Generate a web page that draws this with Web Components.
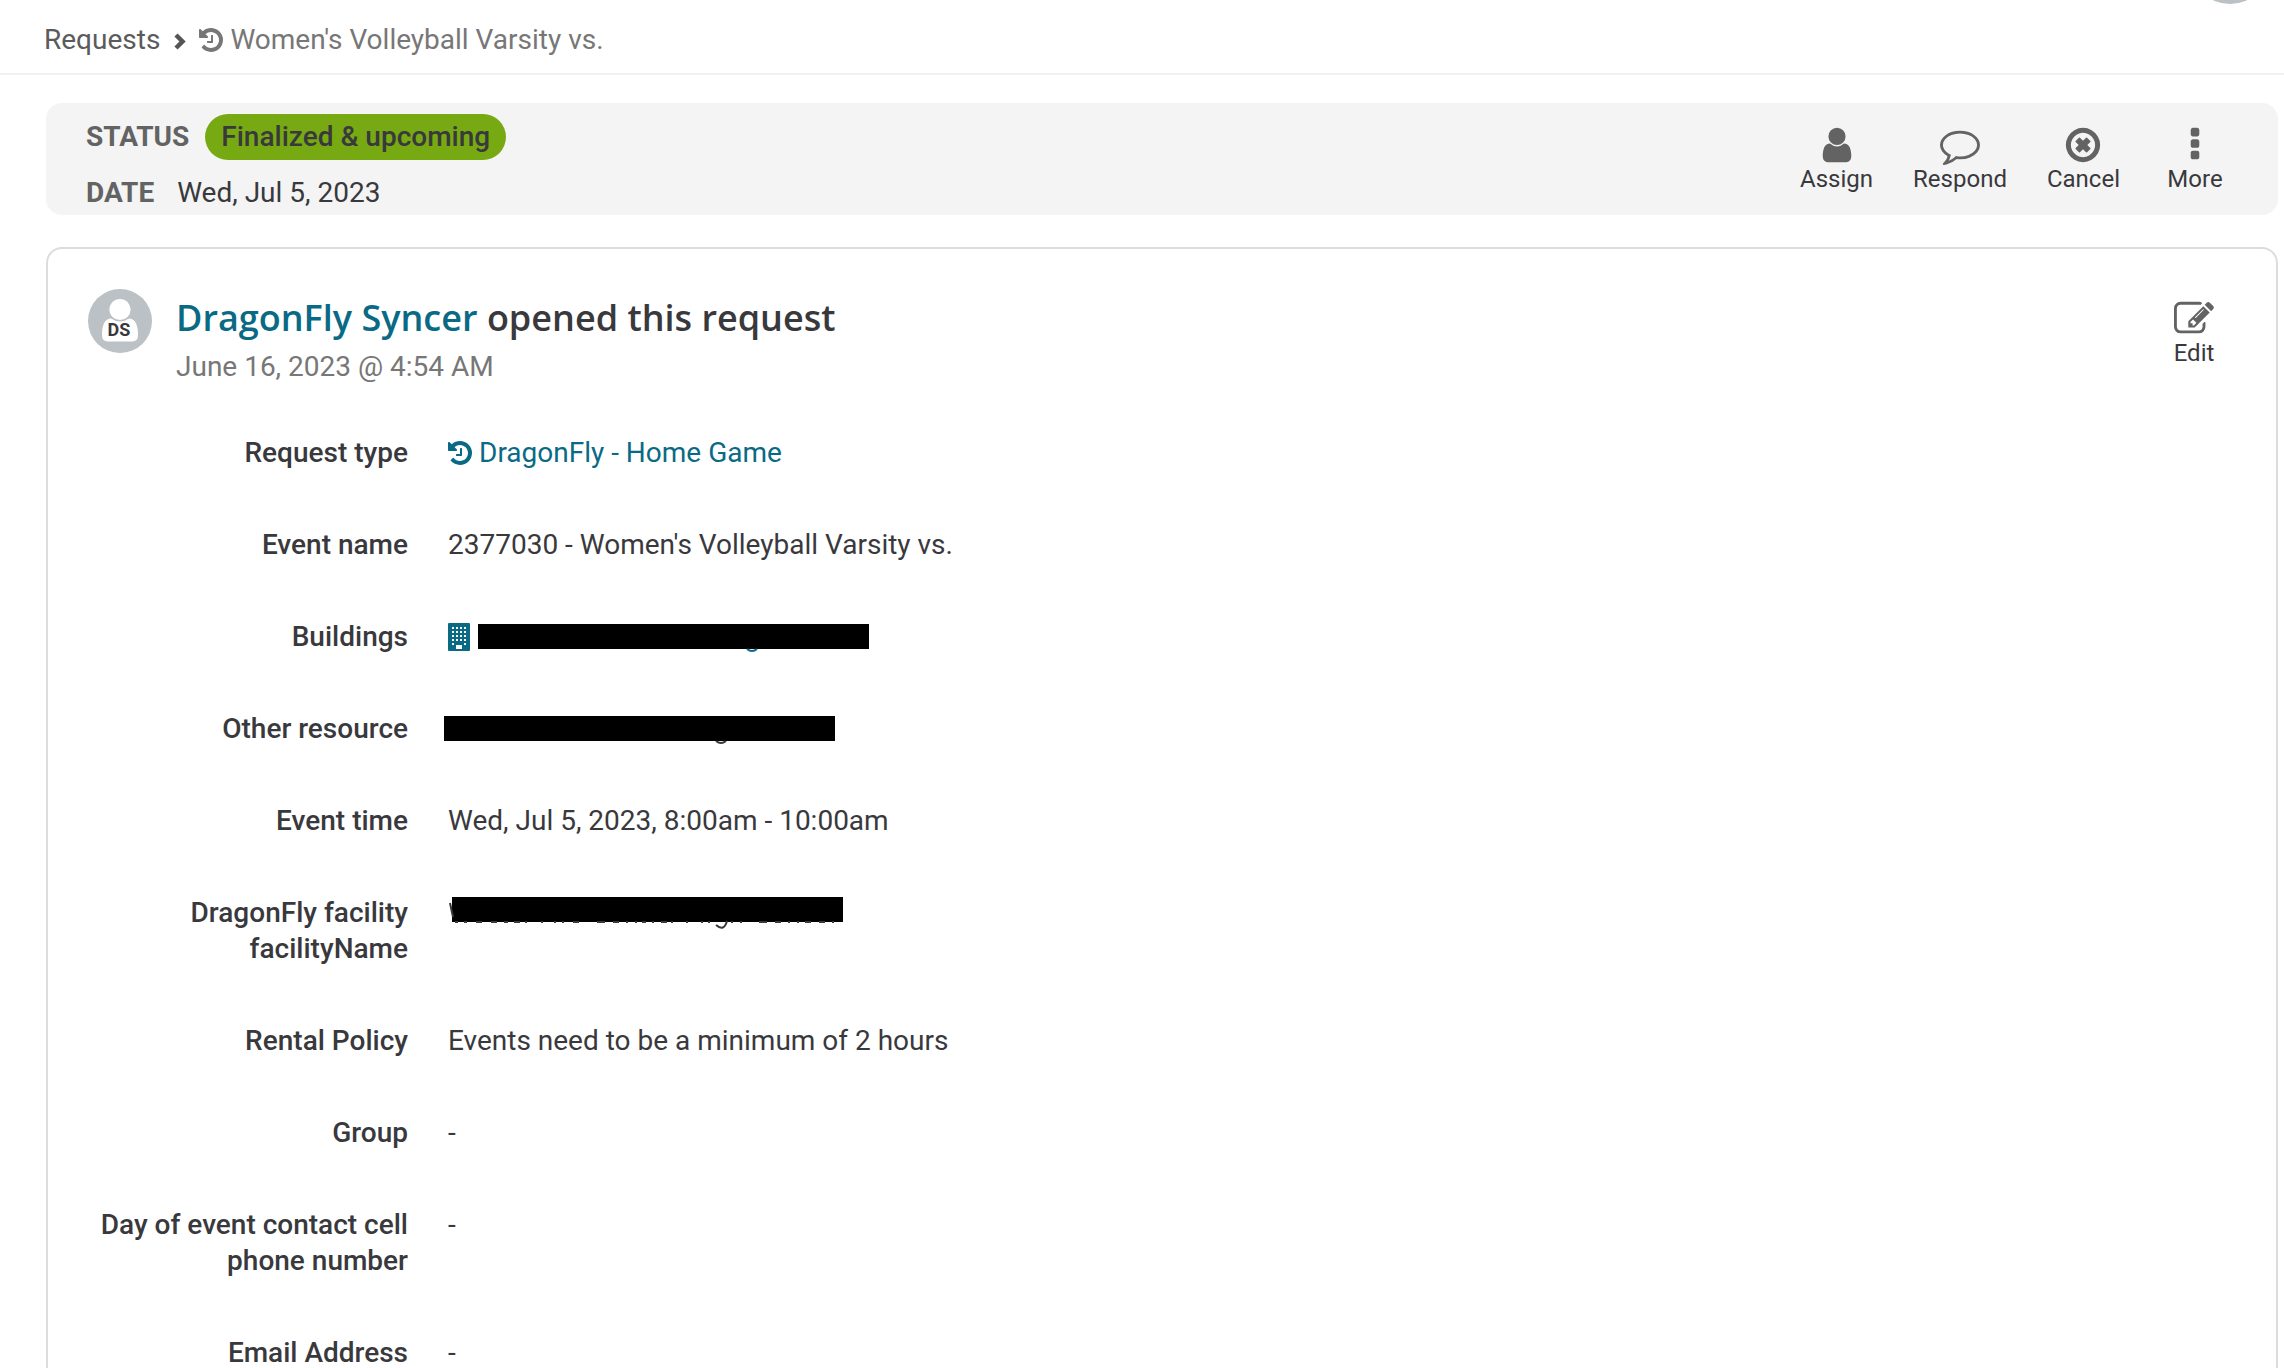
<!DOCTYPE html>
<html lang="en">
<head>
<meta charset="utf-8">
<title>Women's Volleyball Varsity vs.</title>
<style>
  body {
    margin: 0;
    background: #fff;
    color: #39393d;
    font: 28px/36px Roboto, "Liberation Sans", sans-serif;
    --link: #0a6a85;
    --icon: #636363;
    --muted: #777;
  }
  main { padding: 28px 6px 0 46px; }
</style>
</head>
<body>
<page-header>
  <a slot="parent" href="#requests">Requests</a>
  <fa-icon name="history"></fa-icon>
  <span>Women's Volleyball Varsity vs.</span>
</page-header>
<main>
  <status-bar>
    <span slot="status">Finalized &amp; upcoming</span>
    <span slot="date">Wed, Jul 5, 2023</span>
    <action-button slot="actions" icon="user">Assign</action-button>
    <action-button slot="actions" icon="comment">Respond</action-button>
    <action-button slot="actions" icon="cancel">Cancel</action-button>
    <action-button slot="actions" icon="more">More</action-button>
  </status-bar>
  <request-card initials="DS">
    <text-link slot="who" href="#user">DragonFly Syncer</text-link>
    <span slot="what">opened this request</span>
    <span slot="when">June 16, 2023 @ 4:54 AM</span>
    <action-button slot="actions" icon="edit">Edit</action-button>
    <field-row label="Request type"><text-link href="#type" icon="history">DragonFly - Home Game</text-link></field-row>
    <field-row label="Event name">2377030 - Women's Volleyball Varsity vs.</field-row>
    <field-row label="Buildings"><text-link href="#building" icon="building"><redacted-text kind="building"></redacted-text></text-link></field-row>
    <field-row label="Other resource"><redacted-text kind="resource"></redacted-text></field-row>
    <field-row label="Event time">Wed, Jul 5, 2023, 8:00am - 10:00am</field-row>
    <field-row label="DragonFly facility facilityName"><redacted-text kind="facility"></redacted-text></field-row>
    <field-row label="Rental Policy">Events need to be a minimum of 2 hours</field-row>
    <field-row label="Group">-</field-row>
    <field-row label="Day of event contact cell phone number">-</field-row>
    <field-row label="Email Address">-</field-row>
  </request-card>
</main>

<script>
"use strict";

(function() {
  const icons = {
    history: 'M1664 896q0 156-61 298t-164 245-245 164-298 61q-172 0-327-72.5t-264-204.5q-7-10-6.5-22.5t8.5-20.5l137-138q10-9 25-9 16 2 23 12 73 95 179 147t225 52q104 0 198.5-40.5t163.5-109.5 109.5-163.5 40.5-198.5-40.5-198.5-109.5-163.5-163.5-109.5-198.5-40.5q-98 0-188 35.5t-160 101.5l137 138q31 30 14 69-17 40-59 40h-448q-26 0-45-19t-19-45v-448q0-42 40-59 39-17 69 14l130 129q107-101 244.5-156.5t284.5-55.5q156 0 298 61t245 164 164 245 61 298zm-640-288v448q0 14-9 23t-23 9h-320q-14 0-23-9t-9-23v-64q0-14 9-23t23-9h224v-352q0-14 9-23t23-9h64q14 0 23 9t9 23z',
    user: 'M1536 1399q0 109-62.5 187t-150.5 78h-854q-88 0-150.5-78t-62.5-187q0-85 8.5-160.5t31.5-152 58.5-131 94-89 134.5-34.5q131 128 313 128t313-128q76 0 134.5 34.5t94 89 58.5 131 31.5 152 8.5 160.5zm-256-887q0 159-112.5 271.5t-271.5 112.5-271.5-112.5-112.5-271.5 112.5-271.5 271.5-112.5 271.5 112.5 112.5 271.5z',
    comment: 'M896 384q-204 0-381.5 69.5t-282 187.5-104.5 255q0 112 71.5 213.5t201.5 175.5l87 50-27 96q-24 91-70 172 152-63 275-171l43-38 57 6q69 8 130 8 204 0 381.5-69.5t282-187.5 104.5-255-104.5-255-282-187.5-381.5-69.5zm896 512q0 174-120 321.5t-326 233-450 85.5q-70 0-145-8-198 175-460 242-49 14-114 22h-5q-15 0-27-10.5t-16-27.5v-1q-3-4-.5-12t2-10 4.5-9.5l6-9 7-8.5 8-9q7-8 31-34.5t34.5-38 31-39.5 32.5-51 27-59 26-76q-157-89-247.5-220t-90.5-281q0-130 71-248.5t191-204.5 286-136.5 348-50.5 348 50.5 286 136.5 191 204.5 71 248.5z',
    cancel: 'M1225 1079l-146 146q-10 10-23 10t-23-10l-137-137-137 137q-10 10-23 10t-23-10l-146-146q-10-10-10-23t10-23l137-137-137-137q-10-10-10-23t10-23l146-146q10-10 23-10t23 10l137 137 137-137q10-10 23-10t23 10l146 146q10 10 10 23t-10 23l-137 137 137 137q10 10 10 23t-10 23zm215-183q0-148-73-273t-198-198-273-73-273 73-198 198-73 273 73 273 198 198 273 73 273-73 198-198 73-273zm224 0q0 209-103 385.5t-279.5 279.5-385.5 103-385.5-103-279.5-279.5-103-385.5 103-385.5 279.5-279.5 385.5-103 385.5 103 279.5 279.5 103 385.5z',
    more: 'M1088 1248v192q0 40-28 68t-68 28h-192q-40 0-68-28t-28-68v-192q0-40 28-68t68-28h192q40 0 68 28t28 68zm0-512v192q0 40-28 68t-68 28h-192q-40 0-68-28t-28-68v-192q0-40 28-68t68-28h192q40 0 68 28t28 68zm0-512v192q0 40-28 68t-68 28h-192q-40 0-68-28t-28-68v-192q0-40 28-68t68-28h192q40 0 68 28t28 68z',
    edit: 'M888 1184l116-116-152-152-116 116v56h96v96h56zm440-720q-16-16-33 1l-350 350q-17 17-1 33t33-1l350-350q17-17 1-33zm80 594v190q0 119-84.5 203.5t-203.5 84.5h-832q-119 0-203.5-84.5t-84.5-203.5v-832q0-119 84.5-203.5t203.5-84.5h832q63 0 117 25 15 7 18 23 3 17-9 29l-49 49q-14 14-32 8-23-6-45-6h-832q-66 0-113 47t-47 113v832q0 66 47 113t113 47h832q66 0 113-47t47-113v-126q0-13 9-22l64-64q15-15 35-7t20 29zm-96-738l288 288-672 672h-288v-288zm444 132l-92 92-288-288 92-92q28-28 68-28t68 28l152 152q28 28 28 68t-28 68z',
    // windows are 128 units square on a 256 unit pitch
    building: 'M64 0h1280q64 0 64 64v1664q0 64-64 64H64q-64 0-64-64V64Q0 0 64 0z' +
      [256, 512, 768, 1024].map(y => [256, 512, 768, 1024].map(x => `M${x} ${y}v128h128v-128z`).join('')).join('') +
      'M256 1280v128h128v-128zM1024 1280v128h128v-128zM512 1408v256h384v-256z'
  }
  const boxes = {history: '128 0 1536 1792', building: '0 0 1408 1792'}

  // start and end of each mark along the bottom edge of the facility bar
  const marks = [
    [7, 10], [16, 19], [28, 34], [43, 49], [56, 60], [66, 72], [77, 79], [93, 95], [106, 108], [114, 116],
    [125, 131], [149, 157], [165, 171], [178, 180], [187, 189], [194, 198], [204, 206], [213, 219], [223, 225],
    [238, 240], [253, 255], [260, 262], [283, 285], [292, 294], [311, 319], [327, 333], [340, 342], [349, 351],
    [357, 363], [371, 377], [384, 386]
  ]

  // black bar, plus the bits of the lettering it fails to cover
  const redactions = {
    building: '<rect x="1" y="5" width="391" height="25"/><path d="M270 30q5 4 10 0"/>',
    resource: '<rect x="-4" y="5" width="391" height="25"/><path d="M268 30q5 4 10 0"/>',
    facility: '<rect x="4" y="2" width="391" height="25"/><path d="M2 8l3 14M268 30q8 7 11-4"/>' +
      `<path d="${marks.map(([from, to]) => `M${from} 27H${to}`).join('')}"/>`
  }

  const define = (name, render) => {
    customElements.define(name, class extends HTMLElement {
      constructor() {
        super()
        this.attachShadow({mode: 'open'})
      }
      connectedCallback() {
        const template = document.createElement('template')
        template.innerHTML = render(this)
        this.shadowRoot.replaceChildren(template.content.cloneNode(true))
      }
    })
  }

  define('fa-icon', el => {
    const name = el.getAttribute('name')
    return `
    <style>
      :host { display: block; height: 28px; }
      svg { display: block; height: 100%; fill: currentColor; }
    </style>
    <svg viewBox="${boxes[name] || '0 0 1792 1792'}" aria-hidden="true"><path fill-rule="${name === 'building' ? 'evenodd' : 'nonzero'}" d="${icons[name]}"/></svg>`
  })

  define('redacted-text', el => `
    <style>
      :host { display: block; }
      svg { display: block; overflow: visible; }
      path { fill: none; stroke: currentColor; stroke-width: 2; }
    </style>
    <svg width="391" height="36" role="img" aria-label="redacted">${redactions[el.getAttribute('kind')]}</svg>`)

  define('text-link', el => `
    <style>
      :host { display: inline-block; vertical-align: top; }
      a { display: flex; align-items: center; gap: 7px; color: var(--link); text-decoration: none; }
    </style>
    <a href="${el.getAttribute('href')}">
      ${el.hasAttribute('icon') ? `<fa-icon name="${el.getAttribute('icon')}"></fa-icon>` : ''}
      <slot></slot>
    </a>`)

  define('action-button', el => `
    <style>
      :host { display: block; }
      button {
        display: flex; flex-direction: column; align-items: center;
        min-width: 110px; padding: 0 20px; border: 0; background: none;
        color: inherit; font: 24px/28px Roboto, "Liberation Sans", sans-serif;
      }
      fa-icon { height: 40px; color: var(--icon); }
    </style>
    <button type="button"><fa-icon name="${el.getAttribute('icon')}"></fa-icon><slot></slot></button>`)

  define('page-header', () => `
    <style>
      :host { display: block; border-bottom: 2px solid #f1f1f1; }
      header { display: flex; align-items: flex-start; padding-right: 36px; }
      nav { display: flex; flex: 1; align-items: center; gap: 7px; padding: 22px 0 15px 44px; color: var(--muted); }
      ::slotted(a) { color: #5b5b5b; text-decoration: none; }
      .chevron { display: block; margin: 0 6px; }
    </style>
    <header>
      <nav aria-label="Breadcrumb">
        <slot name="parent"></slot>
        <svg class="chevron" width="13" height="20" aria-hidden="true"><path d="M3 5l6.5 6.5L3 18" fill="none" stroke="#555" stroke-width="4.5"/></svg>
        <slot></slot>
      </nav>
      <svg width="36" height="4" aria-hidden="true"><circle cx="18" cy="-36" r="40" fill="#bbc1c4"/></svg>
    </header>`)

  define('status-bar', () => `
    <style>
      :host { display: flex; align-items: center; justify-content: space-between; padding-right: 28px; border-radius: 16px; background: #f4f4f4; }
      dl { margin: 0; padding: 11px 0 4px 40px; }
      div { display: flex; align-items: center; gap: 16px; }
      .date { gap: 23px; margin-top: 15px; }
      dt { color: #636363; font-weight: 700; }
      dd { margin: 0; }
      .pill { padding: 5px 16px; border-radius: 23px; background: #77aa12; font-weight: 500; }
      nav { display: flex; }
    </style>
    <dl>
      <div><dt>STATUS</dt><dd class="pill"><slot name="status"></slot></dd></div>
      <div class="date"><dt>DATE</dt><dd><slot name="date"></slot></dd></div>
    </dl>
    <nav><slot name="actions"></slot></nav>`)

  define('request-card', el => `
    <style>
      :host { display: block; margin-top: 32px; padding: 40px 27px 40px 40px; border: 2px solid #dcdcdc; border-radius: 16px; }
      header { display: flex; gap: 24px; margin-bottom: 50px; }
      .title { flex: 1; }
      h2 { margin: 0; font: 600 36px/58px "Open Sans", sans-serif; }
      p { margin: 2px 0 0; color: var(--muted); }
      .actions { padding-top: 10px; }
      text { font: 700 18px Roboto, sans-serif; fill: #39393d; text-anchor: middle; }
    </style>
    <header>
      <svg width="64" height="64" role="img" aria-label="${el.getAttribute('initials')}">
        <circle cx="32" cy="32" r="32" fill="#bbc1c4"/>
        <path d="M23 29.5q9 6 18 0 9 .5 9 16.500 0 6.500-6 6.500H20q-6 0-6-6.500Q14 30 23 29.500z" fill="#fff"/>
        <circle cx="32" cy="20.500" r="11.500" fill="#bbc1c4"/>
        <circle cx="32" cy="20.500" r="10.600" fill="#fff"/>
        <text x="31" y="47">${el.getAttribute('initials')}</text>
      </svg>
      <div class="title">
        <h2><slot name="who"></slot> <slot name="what"></slot></h2>
        <p><slot name="when"></slot></p>
      </div>
      <div class="actions"><slot name="actions"></slot></div>
    </header>
    <slot></slot>`)

  define('field-row', el => `
    <style>
      :host { display: grid; grid-template-columns: 320px 1fr; gap: 40px; margin-bottom: 56px; }
      .label { font-weight: 500; text-align: right; }
    </style>
    <div class="label" id="label">${el.getAttribute('label')}</div>
    <div role="group" aria-labelledby="label"><slot></slot></div>`)
})();
</script>
</body>
</html>
